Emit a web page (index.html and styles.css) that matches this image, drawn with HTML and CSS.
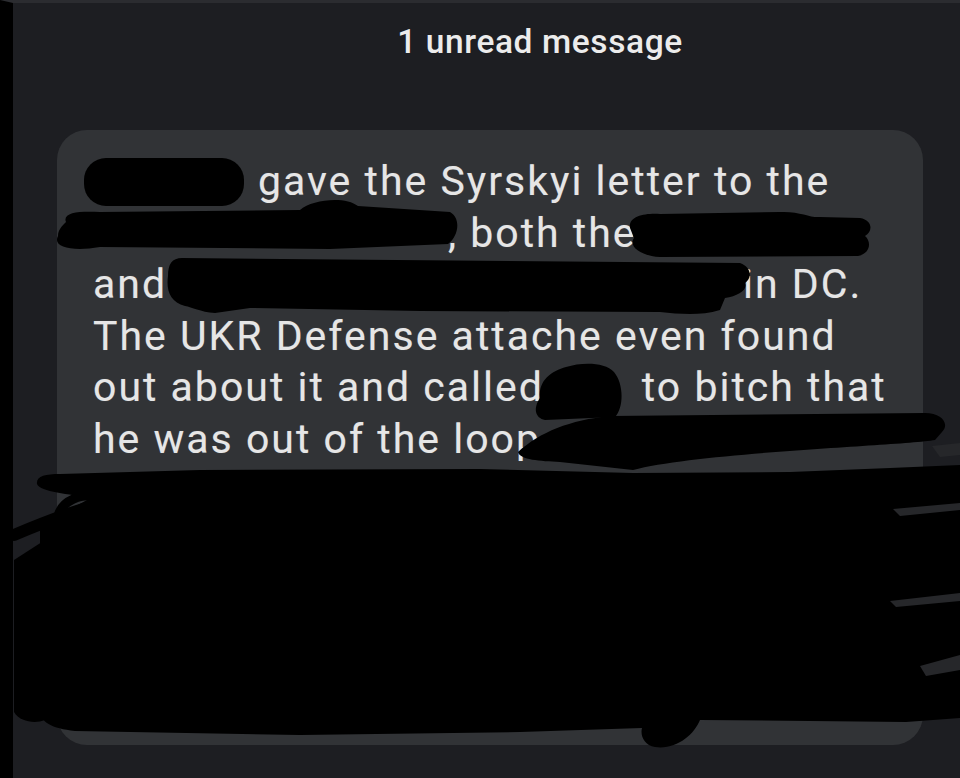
FILE: index.html
```
<!DOCTYPE html>
<html lang="en">
<head>
  <meta charset="UTF-8">
  <meta name="viewport" content="width=device-width, initial-scale=1.0">
  <title>Unread message</title>
  <link rel="stylesheet" href="styles.css">
</head>
<body>
<div class="screen">
  <div class="unread-banner">1 unread message</div>

  <div class="bubble">
    <div class="line"><span class="gap gap-name"></span>gave the Syrskyi letter to the</div>
    <div class="line"><span class="gap gap-org"></span>, both the</div>
    <div class="line">and<span class="gap gap-who"></span>in DC.</div>
    <div class="line">The UKR Defense attache even found</div>
    <div class="line">out about it and called<span class="gap gap-small"></span>to bitch that</div>
    <div class="line">he was out of the loop</div>
  </div>
</div>

<!-- marker scribbles drawn over the screenshot -->
<svg class="scribbles" width="960" height="778" viewBox="0 0 960 778">
  <g fill="#000" stroke="#000" stroke-linecap="round" stroke-linejoin="round">
    <rect x="84" y="158" width="160" height="48" rx="22" stroke="none"/>
    <path stroke="none" d="M66 222 C62 212 80 211 100 212 L300 210 C312 199 346 196 358 206 L450 212 C461 218 459 236 448 244 L330 249 L100 247 C72 252 52 247 58 236 C58 230 62 226 66 222 Z"/>
    <path stroke="none" d="M630 228 C628 216 645 213 660 214 L780 212 C800 211 810 218 820 217 L860 218 C873 220 873 232 865 236 C872 242 870 254 858 256 L660 257 C640 256 628 246 634 238 Z"/>
    <path stroke="none" d="M182 258 L740 263 C752 267 752 279 745 283 C748 290 738 296 725 298 L720 310 C700 316 680 314 660 312 L420 311 L250 308 L215 313 C200 312 192 307 185 306 C170 302 166 290 168 276 C168 264 172 258 182 258 Z"/>
    <path stroke="none" d="M540 398 C538 380 552 371 566 367 C582 362 605 362 614 372 C624 384 624 408 615 417 L545 420 C535 418 533 408 540 398 Z"/>
    <path stroke="none" d="M518 452 C540 432 570 420 610 416 L925 413 C942 413 950 424 942 432 L935 440 C900 446 700 452 633 470 L560 462 C540 461 520 460 518 452 Z"/>
    <path stroke="none" d="M37 484 C36 476 45 474 60 474 L200 470 L480 469 L633 473 L790 472 L890 468 L960 465 L960 718 L906 722 L700 720 C694 735 676 750 655 747 C644 745 640 735 642 728 L520 732 L300 735 L75 731 C50 728 38 722 40 705 L40 520 C60 514 80 505 90 498 C70 494 40 492 37 484 Z"/>
    <path fill="none" stroke-width="12" d="M14 535 C40 524 70 512 100 504"/>
    <path fill="none" stroke-width="9" d="M58 516 C62 500 80 494 100 496"/>
    <path stroke="none" d="M14 560 L45 540 L45 720 C35 724 20 722 14 712 Z"/>
  </g>
  <g fill="#26272a">
    <path d="M893 509 L960 503 L960 510 L900 516 Z"/>
    <path d="M890 601 L960 593 L960 601 L896 607 Z"/>
    <path d="M920 666 L960 655 L960 670 L926 676 Z"/>
    <path d="M932 446 L960 443 L960 455 L940 457 Z"/>
  </g>
</svg>
</body>
</html>
```
FILE: styles.css
```
* {
  margin: 0;
  padding: 0;
  box-sizing: border-box;
}

body {
  background-color: #1d1e22;
  font-family: Roboto, "Noto Sans", "Liberation Sans", sans-serif;
  color: #e6e6e6;
  width: 960px;
  height: 778px;
  overflow: hidden;
}

.screen {
  height: 778px;
  border-left: 13px solid #000;
  border-top: 3px solid #2b2c30;
}

.unread-banner {
  padding: 19px 0 0 107px;
  height: 65px;
  text-align: center;
  font-size: 33.5px;
  line-height: 40px;
  font-weight: 500;
  letter-spacing: 0.6px;
  color: #ececec;
}

.bubble {
  margin: 62px 37px 0 44px;
  height: 615px;
  padding: 26px 30px 0 36px;
  background-color: #313336;
  border-radius: 30px;
  font-size: 41px;
  line-height: 51.5px;
  letter-spacing: 2px;
  white-space: nowrap;
  text-shadow: 0 0 1px rgba(255, 255, 255, 0.25);
}

.line {
  height: 51.5px;
}

.gap {
  display: inline-block;
  height: 1px;
}

.gap-name { width: 165px; }
.gap-org { width: 355px; }
.gap-who { width: 576px; }
.gap-small { width: 98px; }

.scribbles {
  position: absolute;
  top: 0;
  left: 0;
  pointer-events: none;
}
```
